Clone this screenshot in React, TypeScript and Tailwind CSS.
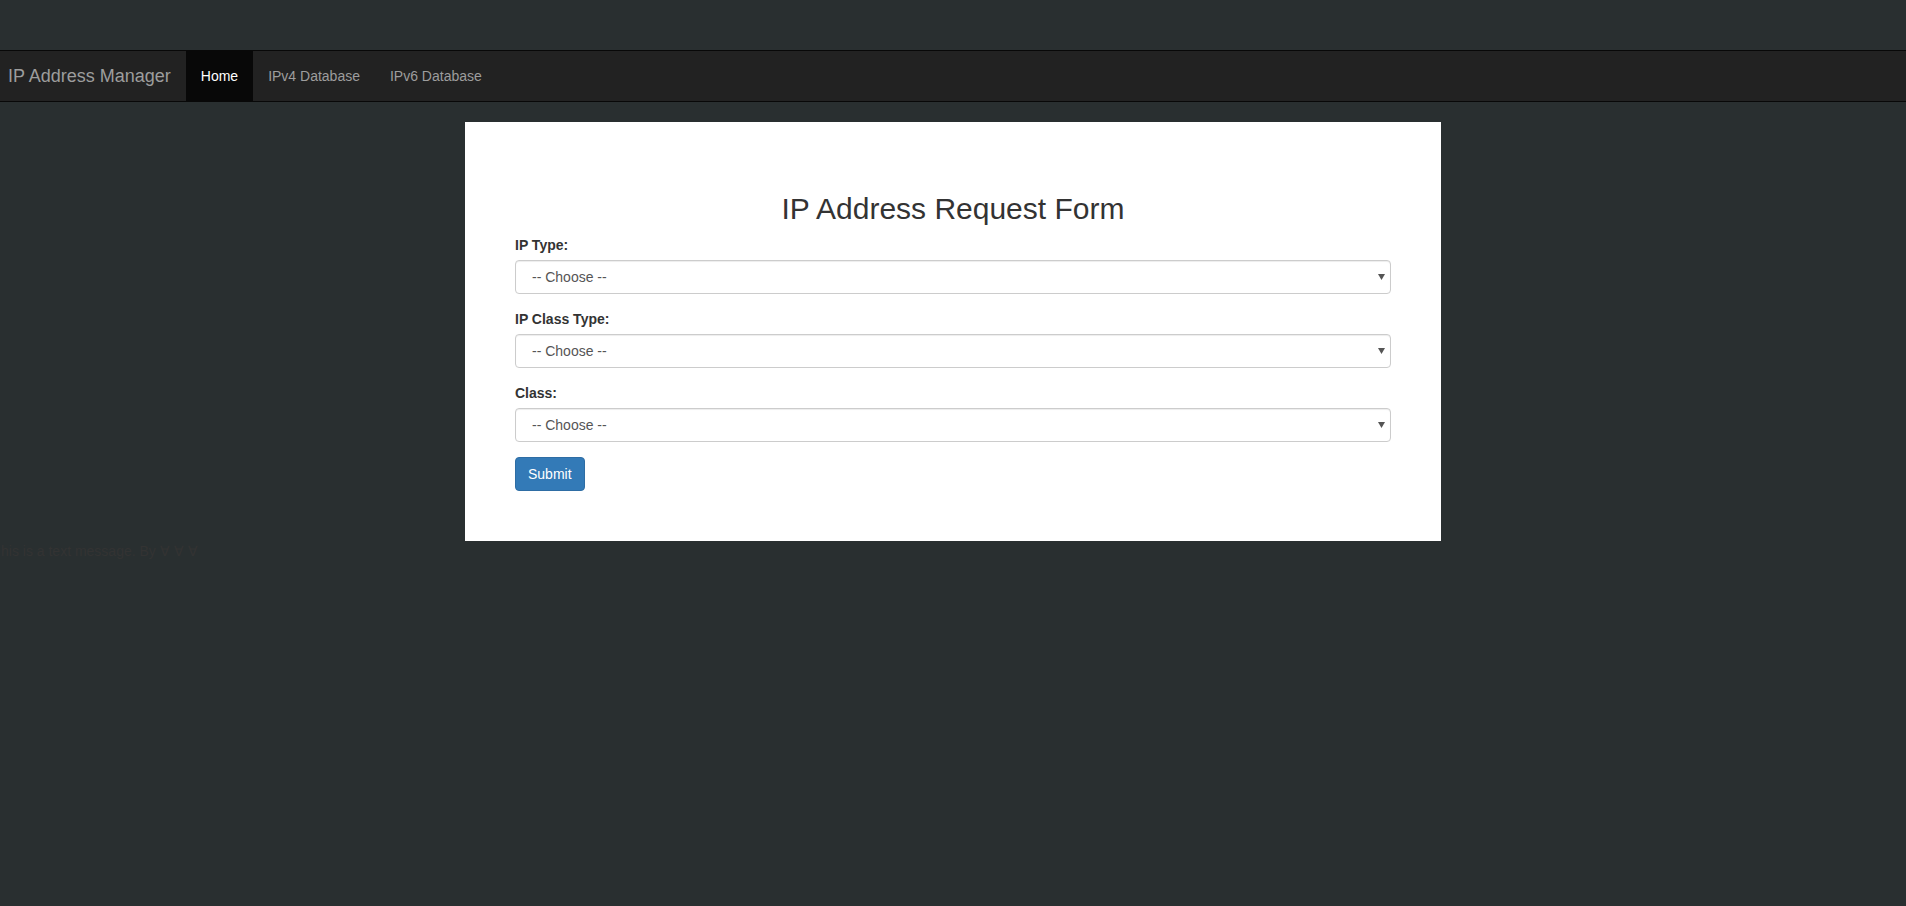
import React from "react";

const fields = ["IP Type:", "IP Class Type:", "Class:"];

function ChooseSelect({ label }: { label: string }) {
  return (
    <div className="mb-[15px]">
      <label className="mb-[5px] block text-[14px] font-bold leading-[20px] text-[#333]">
        {label}
      </label>
      <div className="relative">
        <select
          defaultValue=""
          className="block h-[34px] w-full appearance-none rounded-[4px] border border-[#ccc] bg-white pl-[16px] pr-8 text-[14px] text-[#555] shadow-[inset_0_1px_1px_rgba(0,0,0,0.075)] outline-none"
        >
          <option value="">-- Choose --</option>
        </select>
        <svg
          className="pointer-events-none absolute right-[6px] top-[14px]"
          width="7"
          height="6"
          viewBox="0 0 7 6"
        >
          <path d="M0 0 H7 L3.5 6 Z" fill="#555" />
        </svg>
      </div>
    </div>
  );
}

export default function App() {
  return (
    <div
      className="min-h-screen overflow-hidden bg-[#292f30] text-[14px] leading-[20px] text-[#333]"
      style={{ fontFamily: '"Liberation Sans", Arial, sans-serif' }}
    >
      <div className="h-[50px]" />
      <nav className="mb-[20px] flex h-[52px] border-y border-[#080808] bg-[#222]">
        <a className="py-[15px] pl-[8px] pr-[15px] text-[18px] leading-[20px] text-[#9d9d9d]">
          IP Address Manager
        </a>
        <a className="bg-[#080808] px-[15px] py-[15px] text-white">Home</a>
        <a className="px-[15px] py-[15px] text-[#9d9d9d]">IPv4 Database</a>
        <a className="px-[15px] py-[15px] text-[#9d9d9d]">IPv6 Database</a>
      </nav>

      <div className="mx-auto w-[976px] bg-white px-[50px] py-[50px]">
        <h2 className="mb-[10px] mt-[20px] text-center text-[30px] leading-[33px] text-[#333]">
          IP Address Request Form
        </h2>
        <form onSubmit={(e) => e.preventDefault()}>
          {fields.map((f) => (
            <ChooseSelect key={f} label={f} />
          ))}
          <button
            type="submit"
            className="h-[34px] rounded-[4px] border border-[#2e6da4] bg-[#337ab7] px-[12px] text-[14px] text-white"
          >
            Submit
          </button>
        </form>
      </div>

      <div className="ml-[1px] whitespace-nowrap text-[#333]">
        his is a text message. By ∀ ∀ ∀
      </div>
    </div>
  );
}
